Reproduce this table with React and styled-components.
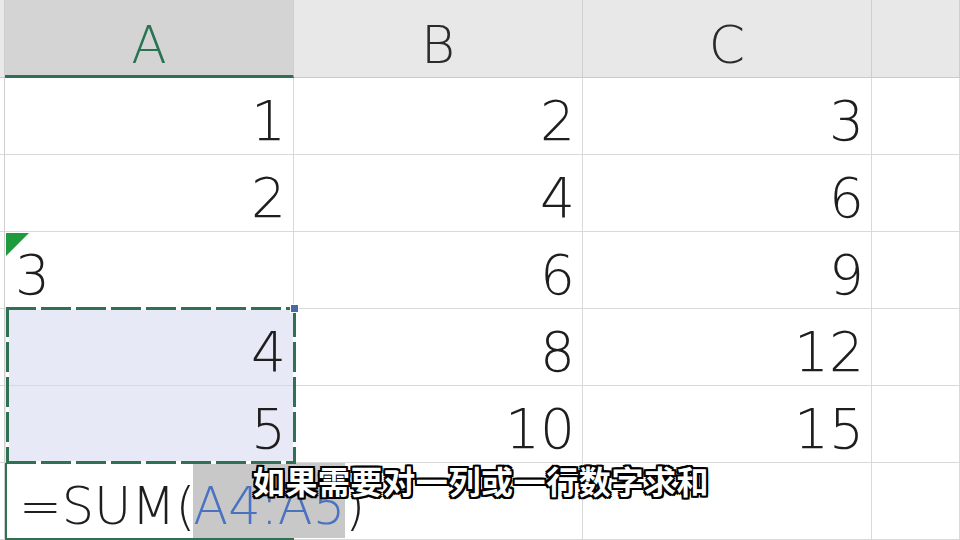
import styled, { createGlobalStyle } from "styled-components";

const GlobalStyle = createGlobalStyle`
  html, body {
    margin: 0;
    padding: 0;
    background: #fff;
    overflow: hidden;
  }
`;

const Sheet = styled.div`
  position: relative;
  width: 960px;
  height: 540px;
  overflow: hidden;
  display: grid;
  grid-template-columns: 5px 289px 289px 289px 88px;
  grid-template-rows: 78px repeat(6, 77px);
  font-family: "DejaVu Sans", "Liberation Sans", sans-serif;
  font-weight: 200;
  color: #1e1e1e;
`;

const CornerHead = styled.div`
  grid-row: 1;
  grid-column: 1;
  background: #e9e9e9;
  border-right: 1px solid #cfcfcf;
  border-bottom: 1px solid #c9c9c9;
`;

const ColHead = styled.div`
  grid-row: 1;
  grid-column: ${(p) => p.$col};
  display: flex;
  justify-content: center;
  align-items: flex-start;
  padding-top: 19px;
  box-sizing: border-box;
  font-size: 52px;
  line-height: 1;
  background: ${(p) => (p.$active ? "#d4d4d4" : "#e8e8e8")};
  color: ${(p) => (p.$active ? "#2a7352" : "#2b2b2b")};
  border-right: 1px solid #cfcfcf;
  border-bottom: ${(p) => (p.$active ? "3px solid #2e7152" : "1px solid #c9c9c9")};
`;

const RowStub = styled.div`
  grid-row: ${(p) => p.$row};
  grid-column: 1;
  border-right: 1px solid #cfcfcf;
  border-bottom: 1px solid #d9d9d9;
`;

const Cell = styled.div`
  grid-row: ${(p) => p.$row};
  grid-column: ${(p) => p.$col};
  position: relative;
  display: flex;
  align-items: flex-end;
  justify-content: ${(p) => (p.$text ? "flex-start" : "flex-end")};
  padding: 0 7px 5px 10px;
  box-sizing: border-box;
  font-size: 55px;
  line-height: 1;
  background: ${(p) => (p.$selected ? "#e7e9f6" : "#fff")};
  border-right: 1px solid #d9d9d9;
  border-bottom: 1px solid #d9d9d9;
`;

const ErrorMark = styled.span`
  position: absolute;
  top: 1px;
  left: 1px;
  width: 0;
  height: 0;
  border-top: 23px solid #1f9a3c;
  border-right: 23px solid transparent;
`;

const Selection = styled.div`
  grid-column: 2;
  grid-row: 5 / 7;
  position: relative;
  z-index: 2;
  margin: -2px -2px -1px 1px;
  pointer-events: none;
  background-image:
    repeating-linear-gradient(90deg, #2f7152 0 30px, #fff 30px 35px),
    repeating-linear-gradient(90deg, #2f7152 0 30px, #fff 30px 35px),
    repeating-linear-gradient(180deg, #2f7152 0 30px, #fff 30px 35px),
    repeating-linear-gradient(180deg, #2f7152 0 30px, #fff 30px 35px);
  background-size: 100% 3px, 100% 3px, 3px 100%, 3px 100%;
  background-position: 0 0, 0 100%, 0 0, 100% 0;
  background-repeat: no-repeat;
`;

const Handle = styled.span`
  position: absolute;
  top: -3px;
  right: -3px;
  width: 7px;
  height: 7px;
  background: #4a6aa6;
  border: 1px solid #fff;
`;

const ActiveCell = styled.div`
  grid-column: 2;
  grid-row: 7;
  position: relative;
  z-index: 1;
  display: flex;
  align-items: stretch;
  padding-left: 12px;
  box-sizing: border-box;
  border: 2px solid #2f7152;
  border-top: none;
  font-size: 51px;
  line-height: 1;
  white-space: nowrap;
  overflow: visible;
`;

const Piece = styled.span`
  display: flex;
  align-items: flex-end;
  padding-bottom: 6px;
  color: ${(p) => (p.$ref ? "#4a72c0" : "#1e1e1e")};
  background: ${(p) => (p.$ref ? "#c8c8c8" : "transparent")};
  margin-left: ${(p) => (p.$ref ? "-2px" : "0")};
`;

const Caret = styled.span`
  align-self: flex-end;
  width: 2px;
  height: 46px;
  margin: 0 0 2px 0;
  background: #111;
`;

const Subtitle = styled.div`
  position: absolute;
  left: 0;
  right: 0;
  top: 462px;
  z-index: 5;
  text-align: center;
  padding-left: 2px;
  font-family: "Noto Sans CJK SC", "Noto Sans", sans-serif;
  font-weight: 700;
  font-size: 32px;
  line-height: 36px;
  letter-spacing: 0.6px;
  color: #fff;
  text-shadow:
    -2px -2px 0 #000, 2px -2px 0 #000, -2px 2px 0 #000, 2px 2px 0 #000,
    0 -2px 0 #000, 0 2px 0 #000, -2px 0 0 #000, 2px 0 0 #000;
`;

const rows = [
  [1, 2, 3],
  [2, 4, 6],
  ["3", 6, 9],
  [4, 8, 12],
  [5, 10, 15],
];

function Row({ values, row }) {
  return (
    <>
      <RowStub $row={row} />
      {values.map((v, i) => {
        const isText = typeof v === "string";
        return (
          <Cell
            key={i}
            $row={row}
            $col={i + 2}
            $text={isText}
            $selected={row >= 5 && i === 0}
          >
            {isText && <ErrorMark />}
            {v}
          </Cell>
        );
      })}
      <Cell $row={row} $col={5} />
    </>
  );
}

function App() {
  return (
    <>
      <GlobalStyle />
      <Sheet>
        <CornerHead />
        <ColHead $col={2} $active>A</ColHead>
        <ColHead $col={3}>B</ColHead>
        <ColHead $col={4}>C</ColHead>
        <ColHead $col={5} />

        {rows.map((values, r) => (
          <Row key={r} values={values} row={r + 2} />
        ))}

        <RowStub $row={7} />
        <ActiveCell>
          <Piece>=SUM(</Piece>
          <Piece $ref>A4:A5</Piece>
          <Caret />
          <Piece>)</Piece>
        </ActiveCell>
        <Cell $row={7} $col={3} />
        <Cell $row={7} $col={4} />
        <Cell $row={7} $col={5} />

        <Selection>
          <Handle />
        </Selection>

        <Subtitle>如果需要对一列或一行数字求和</Subtitle>
      </Sheet>
    </>
  );
}

export default App;
